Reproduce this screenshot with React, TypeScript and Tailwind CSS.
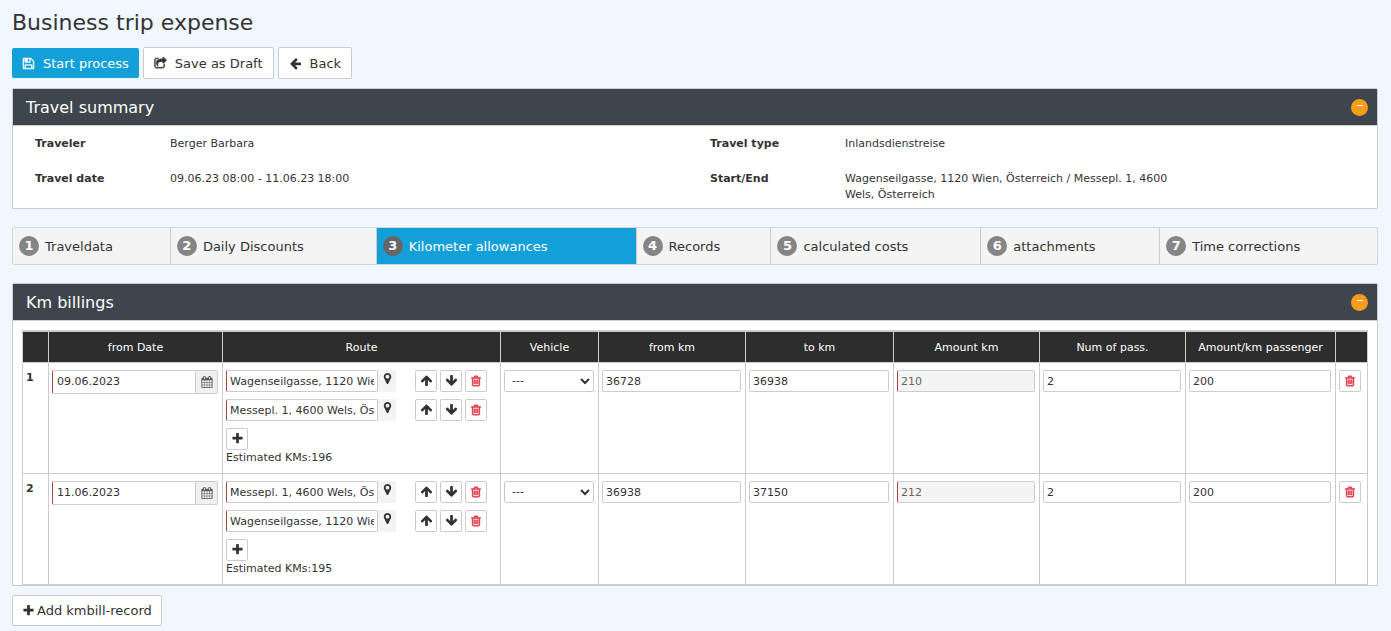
import React from 'react';

const ICONS = {
  save: 'M512 1536h768v-384h-768v384zm896 0h128v-896q0-14-10-38.5t-20-34.5l-281-281q-10-10-34-20t-39-10v416q0 40-28 68t-68 28h-576q-40 0-68-28t-28-68v-416h-128v1280h128v-416q0-40 28-68t68-28h832q40 0 68 28t28 68v416zm-384-928v-320q0-13-9.5-22.5t-22.5-9.5h-192q-13 0-22.5 9.5t-9.5 22.5v320q0 13 9.5 22.5t22.5 9.5h192q13 0 22.5-9.5t9.5-22.5zm640 32v928q0 40-28 68t-68 28h-1344q-40 0-68-28t-28-68v-1344q0-40 28-68t68-28h928q40 0 88 20t76 48l280 280q28 28 48 76t20 88z',
  share: 'M1472 989v259q0 119-84.5 203.5t-203.5 84.5h-832q-119 0-203.5-84.5t-84.5-203.5v-832q0-119 84.5-203.5t203.5-84.5h255q13 0 22.5 9.5t9.5 22.5q0 27-26 32-77 26-133 60-10 4-16 4h-112q-66 0-113 47t-47 113v832q0 66 47 113t113 47h832q66 0 113-47t47-113v-214q0-19 18-29 28-13 54-37 16-16 35-8 21 9 21 29zm237-496l-384 384q-18 19-45 19-12 0-25-5-39-17-39-59v-192h-160q-323 0-438 131-119 137-74 473 3 23-20 34-8 2-12 2-16 0-26-13-10-14-21-31t-39.5-68.5-49.5-99.5-38.5-114-17.5-122q0-49 3.5-91t14-90 28-88 47-81.5 68.5-74 94.5-61.5 124.5-48.5 159.5-30.5 196.5-11h160v-192q0-42 39-59 13-5 25-5 26 0 45 19l384 384q19 19 19 45t-19 45z',
  left: 'M1664 896v128q0 53-32.5 90.5t-84.5 37.5h-704l293 294q38 36 38 90t-38 90l-75 76q-37 37-90 37-52 0-91-37l-651-652q-37-37-37-90 0-52 37-91l651-650q38-38 91-38 52 0 90 38l75 74q38 38 38 91t-38 91l-293 293h704q52 0 84.5 37.5t32.5 90.5z',
  up: 'M1675 971q0 51-37 90l-75 75q-38 38-91 38-54 0-90-38l-294-293v704q0 52-37.5 84.5t-90.5 32.5h-128q-53 0-90.5-32.5t-37.5-84.5v-704l-294 293q-36 38-90 38t-90-38l-75-75q-38-38-38-90 0-53 38-91l651-651q35-37 90-37 54 0 91 37l651 651q37 39 37 91z',
  down: 'M1675 832q0 53-37 90l-651 652q-39 37-91 37-53 0-90-37l-651-652q-38-36-38-90 0-53 38-91l74-75q39-37 91-37 53 0 90 37l294 294v-704q0-52 38-90t90-38h128q52 0 90 38t38 90v704l294-294q37-37 90-37 52 0 91 37l75 75q37 39 37 91z',
  plus: 'M1600 736v192q0 40-28 68t-68 28h-416v416q0 40-28 68t-68 28h-192q-40 0-68-28t-28-68v-416h-416q-40 0-68-28t-28-68v-192q0-40 28-68t68-28h416v-416q0-40 28-68t68-28h192q40 0 68 28t28 68v416h416q40 0 68 28t28 68z',
  trash: 'M704 736v576q0 14-9 23t-23 9h-64q-14 0-23-9t-9-23v-576q0-14 9-23t23-9h64q14 0 23 9t9 23zm256 0v576q0 14-9 23t-23 9h-64q-14 0-23-9t-9-23v-576q0-14 9-23t23-9h64q14 0 23 9t9 23zm256 0v576q0 14-9 23t-23 9h-64q-14 0-23-9t-9-23v-576q0-14 9-23t23-9h64q14 0 23 9t9 23zm128 724v-948h-896v948q0 22 7 40.5t14.5 27 10.5 8.5h832q3 0 10.5-8.5t14.5-27 7-40.5zm-672-1076h448l-48-117q-7-9-17-11h-317q-10 2-17 11zm928 32v64q0 14-9 23t-23 9h-96v948q0 83-47 143.5t-113 60.5h-832q-66 0-113-58.5t-47-141.5v-952h-96q-14 0-23-9t-9-23v-64q0-14 9-23t23-9h309l70-167q15-37 54-63t79-26h320q40 0 79 26t54 63l70 167h309q14 0 23 9t9 23z',
  marker: 'M1152 640q0-106-75-181t-181-75-181 75-75 181 75 181 181 75 181-75 75-181zm256 0q0 109-33 179l-364 774q-16 33-47.5 52t-67.5 19-67.5-19-46.5-52l-365-774q-33-70-33-179 0-212 150-362t362-150 362 150 150 362z',
  calendar: 'M192 1664h288v-288h-288v288zm352 0h320v-288h-320v288zm-352-352h288v-320h-288v320zm352 0h320v-320h-320v320zm-352-384h288v-288h-288v288zm736 736h320v-288h-320v288zm-384-736h320v-288h-320v288zm768 736h288v-288h-288v288zm-384-352h320v-320h-320v320zm-352-864v-288q0-13-9.5-22.5t-22.5-9.5h-64q-13 0-22.5 9.5t-9.5 22.5v288q0 13 9.5 22.5t22.5 9.5h64q13 0 22.5-9.5t9.5-22.5zm736 864h288v-320h-288v320zm-384-384h320v-288h-320v288zm384 0h288v-288h-288v288zm32-480v-288q0-13-9.5-22.5t-22.5-9.5h-64q-13 0-22.5 9.5t-9.5 22.5v288q0 13 9.5 22.5t22.5 9.5h64q13 0 22.5-9.5t9.5-22.5zm384-64v1280q0 52-38 90t-90 38h-1408q-52 0-90-38t-38-90v-1280q0-52 38-90t90-38h128v-96q0-66 47-113t113-47h64q66 0 113 47t47 113v96h384v-96q0-66 47-113t113-47h64q66 0 113 47t47 113v96h128q52 0 90 38t38 90z',
};

const STEPS = ['Traveldata', 'Daily Discounts', 'Kilometer allowances', 'Records', 'calculated costs', 'attachments', 'Time corrections'];
const ACTIVE_STEP = 2;

const COLUMNS = [
  { label: '', width: 'w-[26px]' },
  { label: 'from Date', width: 'w-[174px]' },
  { label: 'Route', width: 'w-[278px]' },
  { label: 'Vehicle', width: 'w-[98px]' },
  { label: 'from km', width: 'w-[147px]' },
  { label: 'to km', width: 'w-[148px]' },
  { label: 'Amount km', width: 'w-[146px]' },
  { label: 'Num of pass.', width: 'w-[146px]' },
  { label: 'Amount/km passenger', width: 'w-[150px]' },
  { label: '', width: 'w-[32px]' },
];

const BILLINGS = [
  { date: '09.06.2023', route: ['Wagenseilgasse, 1120 Wien, Österreich', 'Messepl. 1, 4600 Wels, Österreich'], estimated: 196, from: '36728', to: '36938', amount: '210', passengers: '2', rate: '200' },
  { date: '11.06.2023', route: ['Messepl. 1, 4600 Wels, Österreich', 'Wagenseilgasse, 1120 Wien, Österreich'], estimated: 195, from: '36938', to: '37150', amount: '212', passengers: '2', rate: '200' },
];

function Icon({ name, className = 'size-[13px]' }: { name: keyof typeof ICONS; className?: string }) {
  return (
    <svg viewBox="0 0 1792 1792" fill="currentColor" aria-hidden="true" className={`shrink-0 ${className}`}>
      <path d={ICONS[name]} />
    </svg>
  );
}

function SquareButton({ icon, label, danger }: { icon: keyof typeof ICONS; label: string; danger?: boolean }) {
  return (
    <button
      type="button"
      aria-label={label}
      className={`flex size-[22px] shrink-0 items-center justify-center rounded-xs border border-[#ccc] bg-white ${danger ? 'text-[#dc3545]' : 'text-[#333]'}`}
    >
      <Icon name={icon} className={danger ? 'size-3 stroke-current stroke-[70]' : 'size-[13px]'} />
    </button>
  );
}

function Field({ label, value, required, readOnly }: { label: string; value: string; required?: boolean; readOnly?: boolean }) {
  return (
    <input
      type="text"
      aria-label={label}
      defaultValue={value}
      readOnly={readOnly}
      className={`block h-[22px] w-full min-w-0 rounded-xs border border-[#ccc] px-[3px] pt-[2px] ${required ? 'border-l-[#a94442]' : ''} ${readOnly ? 'bg-[#f4f4f4] text-[#666]' : 'bg-white'}`}
    />
  );
}

function Panel({ title, children }: { title: string; children: React.ReactNode }) {
  return (
    <section className="rounded-t-xs border border-[#ccc] bg-white">
      <header className="flex h-[37px] items-center justify-between border-b border-[#ccc] bg-[#3e454c] pr-[9px] pl-[13px]">
        <h2 className="pt-[2px] text-base text-white">{title}</h2>
        <button type="button" aria-label={`Collapse ${title}`} className="size-[17px] rounded-full bg-[#f89c1c] text-white">
          <svg viewBox="0 0 17 17" aria-hidden="true">
            <path d="M6 6.5h6" stroke="currentColor" />
          </svg>
        </button>
      </header>
      {children}
    </section>
  );
}

export default function App() {
  return (
    <main className="min-h-screen bg-[#f0f7ff] pt-[9px] pr-[13px] pb-1 pl-3 font-['DejaVu_Sans',Verdana,sans-serif] text-[11px] leading-4 text-[#333]">
      <h1 className="text-[22px] leading-7">Business trip expense</h1>

      <div className="mt-[10px] flex items-center gap-1 text-[13px]">
        <button type="button" className="flex h-[30px] items-center gap-2 rounded-xs bg-[#139fd7] px-[10px] text-white">
          <Icon name="save" className="size-[13px] stroke-current stroke-[60]" />
          <span className="pt-[2px]">Start process</span>
        </button>
        <button type="button" className="flex h-8 items-center gap-2 rounded-xs border border-[#ccc] bg-white px-[10px]">
          <Icon name="share" className="size-[13px] stroke-current stroke-[60]" />
          <span className="pt-[2px]">Save as Draft</span>
        </button>
        <button type="button" className="flex h-8 items-center gap-2 rounded-xs border border-[#ccc] bg-white px-[10px]">
          <Icon name="left" />
          <span className="pt-[2px]">Back</span>
        </button>
      </div>

      <div className="mt-[9px]">
        <Panel title="Travel summary">
          <dl className="grid grid-cols-[135px_540fr_135px_532fr] gap-y-[19px] pt-[10px] pb-[5px] pl-[22px]">
            <dt className="font-bold">Traveler</dt>
            <dd>Berger Barbara</dd>
            <dt className="font-bold">Travel type</dt>
            <dd>Inlandsdienstreise</dd>
            <dt className="font-bold">Travel date</dt>
            <dd>09.06.23 08:00 - 11.06.23 18:00</dd>
            <dt className="font-bold">Start/End</dt>
            <dd className="max-w-[340px]">Wagenseilgasse, 1120 Wien, Österreich / Messepl. 1, 4600 Wels, Österreich</dd>
          </dl>
        </Panel>
      </div>

      <nav className="mt-[18px]">
        <ol className="grid grid-cols-[158fr_206fr_260fr_135fr_210fr_179fr_217fr] rounded-xs border border-[#d5d5d5] bg-[#f4f4f4] text-[13px]">
          {STEPS.map((step, i) => {
            const active = i === ACTIVE_STEP;
            return (
              <li key={step} className="border-r border-[#ccc] last:border-r-0">
                <a href="#" className={`flex h-9 items-center gap-[6px] pl-[6px] whitespace-nowrap ${active ? 'bg-[#139fd7] text-white' : ''}`}>
                  <span className={`flex size-5 items-center justify-center rounded-full font-bold text-white ${active ? 'bg-[#666]' : 'bg-[#858585]'}`}>{i + 1}</span>
                  <span className="pt-[2px]">{step}</span>
                </a>
              </li>
            );
          })}
        </ol>
      </nav>

      <div className="mt-[18px]">
        <Panel title="Km billings">
          <div className="px-[9px] pt-[9px]">
            <table className="w-full table-fixed border-collapse border-t-2 border-[#ccc]">
              <thead>
                <tr className="h-[31px] bg-[#2d2d2d] text-white">
                  {COLUMNS.map((col, i) => (
                    <th key={i} scope="col" className={`border border-[#ccc] p-0 pt-[2px] font-normal ${col.width}`}>{col.label}</th>
                  ))}
                </tr>
              </thead>
              <tbody>
                {BILLINGS.map((row, i) => (
                  <tr key={row.date} className="align-top *:border *:border-[#ccc] *:py-[7px] *:pr-1 *:pl-[3px]">
                    <th scope="row" className="text-left">{i + 1}</th>
                    <td>
                      <div className="flex h-6 rounded-xs border border-[#ccc] border-l-[#a94442] bg-white">
                        <input type="text" aria-label="from Date" defaultValue={row.date} className="w-full min-w-0 px-1" />
                        <button type="button" aria-label="Choose date" className="flex w-[22px] shrink-0 items-center justify-center border-l border-[#ccc] bg-[#f0f0f0] text-[#555]">
                          <Icon name="calendar" className="size-3" />
                        </button>
                      </div>
                    </td>
                    <td>
                      <div className="flex flex-col gap-[7px]">
                        {row.route.map((stop, n) => (
                          <div key={stop} className="flex">
                            <div className="flex w-[170px] rounded-r-xs bg-[#f4f4f4]">
                              <Field label={`Stop ${n + 1}`} value={stop} required />
                              <button type="button" aria-label="Show on map" className="flex w-[18px] shrink-0 justify-center pt-[2px]">
                                <Icon name="marker" />
                              </button>
                            </div>
                            <div className="ml-[19px] flex gap-[3px]">
                              <SquareButton icon="up" label="Move up" />
                              <SquareButton icon="down" label="Move down" />
                              <SquareButton icon="trash" label="Delete stop" danger />
                            </div>
                          </div>
                        ))}
                        <SquareButton icon="plus" label="Add stop" />
                      </div>
                      <p>Estimated KMs:{row.estimated}</p>
                    </td>
                    <td>
                      <select aria-label="Vehicle" className="block h-[22px] w-full rounded-xs border border-[#ccc] bg-white px-[3px]">
                        <option>---</option>
                      </select>
                    </td>
                    <td><Field label="from km" value={row.from} /></td>
                    <td><Field label="to km" value={row.to} /></td>
                    <td><Field label="Amount km" value={row.amount} required readOnly /></td>
                    <td><Field label="Num of pass." value={row.passengers} /></td>
                    <td><Field label="Amount/km passenger" value={row.rate} /></td>
                    <td><SquareButton icon="trash" label="Delete record" danger /></td>
                  </tr>
                ))}
              </tbody>
            </table>
          </div>
        </Panel>
      </div>

      <button type="button" className="mt-[9px] flex h-[31px] items-center gap-[2px] rounded-xs border border-[#ccc] bg-white px-[9px] text-[13px]">
        <Icon name="plus" />
        <span className="pt-[2px]">Add kmbill-record</span>
      </button>
    </main>
  );
}
